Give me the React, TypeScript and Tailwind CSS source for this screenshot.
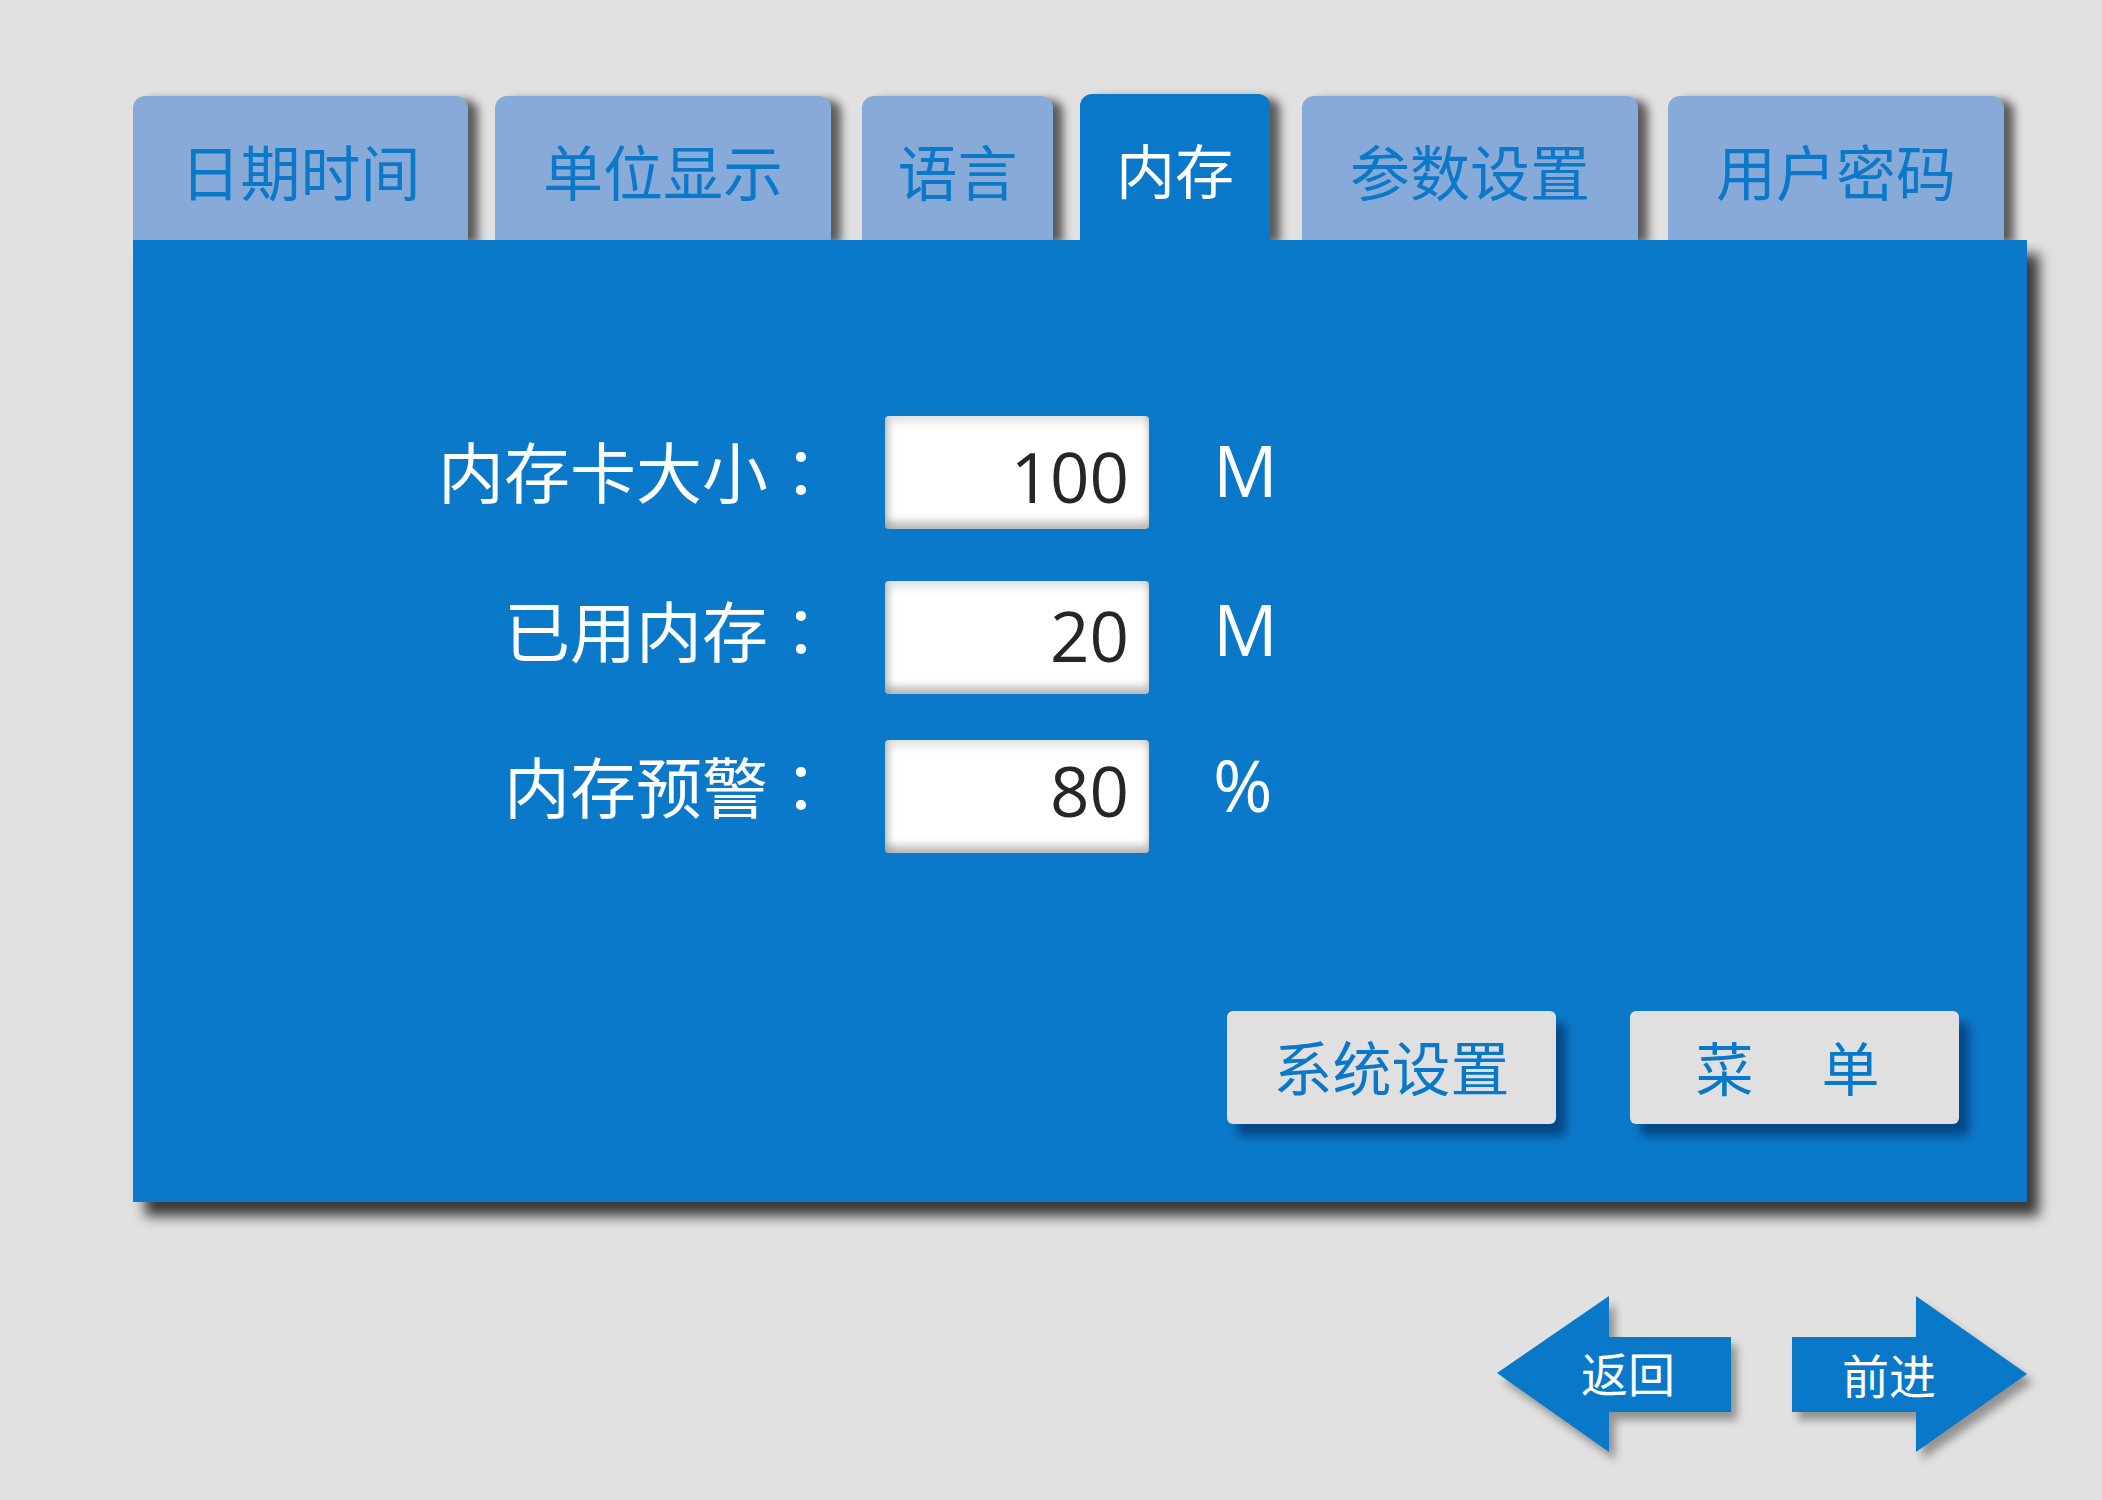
import React from 'react';

const tabs = [
  { label: '日期时间', w: 'w-[335px]', ml: 'ml-0' },
  { label: '单位显示', w: 'w-[336px]', ml: 'ml-[27px]' },
  { label: '语言', w: 'w-[191px]', ml: 'ml-[31px]' },
  { label: '内存', w: 'w-[190px]', ml: 'ml-[27px]', active: true },
  { label: '参数设置', w: 'w-[336px]', ml: 'ml-[32px]' },
  { label: '用户密码', w: 'w-[336px]', ml: 'ml-[30px]' },
];

// text offsets per row so the glyphs sit where the original HMI puts them
const rows = [
  { label: '内存卡大小', value: '100', unit: 'M', mt: 'mt-0', shift: '-translate-y-[4px]', vshift: 'translate-y-0' },
  { label: '已用内存', value: '20', unit: 'M', mt: 'mt-[52px]', shift: '-translate-y-[10px]', vshift: '-translate-y-[6px]' },
  { label: '内存预警', value: '80', unit: '%', mt: 'mt-[46px]', shift: '-translate-y-[13px]', vshift: '-translate-y-[10px]' },
];

export default function App() {
  return (
    <div className="w-[2102px] h-[1500px] bg-[#e1e1e1] pl-[133px] pt-[95px] font-['Noto_Sans_CJK_SC',sans-serif] overflow-hidden">
      {/* ── Tabs ── */}
      <div className="flex items-end h-[145px]">
        {tabs.map((t) =>
          t.active ? (
            <div
              key={t.label}
              className={`${t.w} ${t.ml} h-[146px] rounded-t-[12px] bg-[#0a78c8] flex items-center justify-center pt-[4px] text-white text-[59px] shadow-[10px_4px_10px_rgba(0,0,0,0.6)]`}
            >
              {t.label}
            </div>
          ) : (
            <div
              key={t.label}
              className={`${t.w} ${t.ml} h-[144px] rounded-t-[12px] bg-[#88aad9] flex items-center justify-center pt-[4px] text-[#0b78c8] text-[60px] shadow-[10px_4px_10px_rgba(0,0,0,0.6)]`}
            >
              {t.label}
            </div>
          )
        )}
      </div>

      {/* ── Panel ── */}
      <div className="relative w-[1894px] h-[962px] bg-[#0b79c9] flex flex-col pt-[176px] shadow-[12px_14px_12px_rgba(0,0,0,0.75)]">
        {rows.map((r) => (
          <div key={r.label} className={`flex items-center ${r.mt}`}>
            <div className={`w-[701px] text-right text-white text-[66px] leading-none ${r.shift}`}>
              {r.label}
              <span className="font-['Noto_Sans_CJK_TC',sans-serif]">：</span>
            </div>
            <div className="ml-[51px] w-[264px] h-[113px] rounded-[4px] bg-white flex items-center justify-end pr-[20px] shadow-[inset_0_-7px_8px_rgba(0,0,0,0.28),inset_5px_6px_8px_rgba(0,0,0,0.12)]">
              <span className={`font-['Open_Sans',sans-serif] text-[69px] leading-none text-[#262626] pt-[8px] ${r.vshift}`}>{r.value}</span>
            </div>
            <div className={`ml-[64px] font-['Open_Sans',sans-serif] text-[72px] leading-none text-white ${r.shift}`}>{r.unit}</div>
          </div>
        ))}

        <div className="flex-1" />

        <div className="flex justify-end gap-[74px] pr-[68px] pb-[78px]">
          <button className="w-[329px] h-[113px] rounded-[6px] bg-[#e0e0e0] text-[#0a78c8] text-[59px] flex items-center justify-center pb-[3px] shadow-[10px_12px_10px_rgba(0,40,90,0.6)]">
            系统设置
          </button>
          <button className="w-[329px] h-[113px] rounded-[6px] bg-[#e0e0e0] text-[#0a78c8] text-[58px] flex items-center justify-center gap-[68px] pr-[14px] pb-[3px] shadow-[10px_12px_10px_rgba(0,40,90,0.6)]">
            <span>菜</span>
            <span>单</span>
          </button>
        </div>
      </div>

      {/* ── Arrows ── */}
      <div className="w-[1894px] flex justify-end gap-[61px] mt-[94px]">
        <div className="relative w-[234px] h-[156px] flex items-center pl-[84px] pb-[6px]">
          <svg className="absolute inset-0 drop-shadow-[6px_8px_4px_rgba(0,0,0,0.35)]" width="234" height="156" viewBox="0 0 234 156">
            <polygon points="0,77 112,0 112,41 234,41 234,116 112,116 112,156" fill="#0a78c8" />
          </svg>
          <span className="relative text-white text-[47px] leading-none">返回</span>
        </div>
        <div className="relative w-[235px] h-[156px] flex items-center pl-[50px] pb-[2px]">
          <svg className="absolute inset-0 drop-shadow-[6px_8px_4px_rgba(0,0,0,0.35)]" width="235" height="156" viewBox="0 0 235 156">
            <polygon points="0,41 124,41 124,0 235,78 124,156 124,116 0,116" fill="#0a78c8" />
          </svg>
          <span className="relative text-white text-[47px] leading-none">前进</span>
        </div>
      </div>
    </div>
  );
}
